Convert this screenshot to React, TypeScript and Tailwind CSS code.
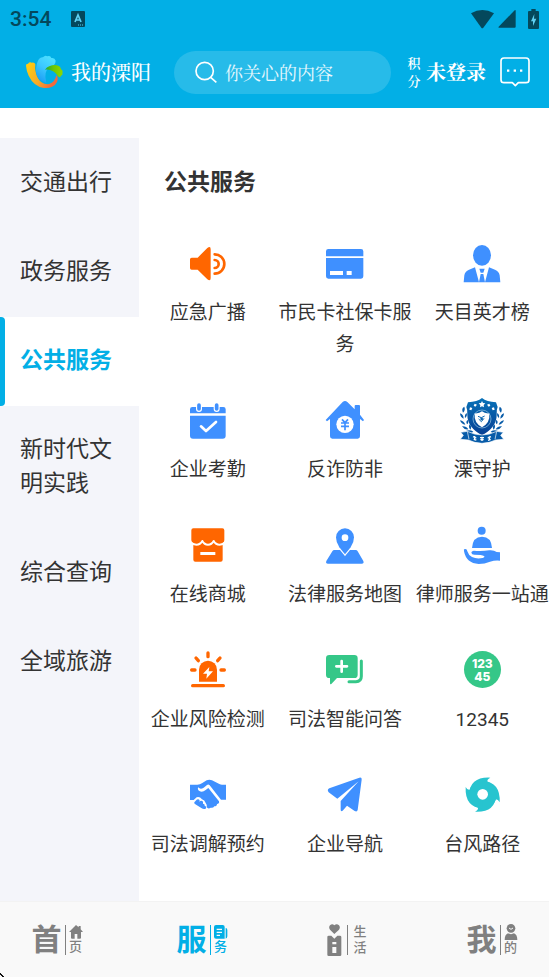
import React from "react";

const BLUE = "#3f90ff";
const ORANGE = "#ff6600";
const GREEN = "#35c788";

function Icon({ children }: { children: React.ReactNode }) {
  return (
    <svg viewBox="0 0 144 144" className="h-12 w-12 shrink-0" fill="none" aria-hidden="true">
      {children}
    </svg>
  );
}

const Speaker = () => (
  <Icon>
    <path fill={ORANGE} d="M23 53H41L70 24Q80 17 80 28V114Q80 125 70 118L41 89H23Q18 89 18 84V58Q18 53 23 53Z" />
    <path stroke={ORANGE} strokeWidth="8" strokeLinecap="round" d="M92 43A29 29 0 0 1 92 101" />
    <path stroke={ORANGE} strokeWidth="8" strokeLinecap="round" d="M92 60A12 12 0 0 1 92 84" />
  </Icon>
);

const Card = () => (
  <Icon>
    <path fill={BLUE} d="M22 27H120Q127 27 127 34V49H15V34Q15 27 22 27ZM15 54H127V109Q127 116 120 116H22Q15 116 15 109Z" />
    <path fill="#fff" d="M27 93H66V105H27ZM77 93H92V105H77Z" />
  </Icon>
);

const Person = () => (
  <Icon>
    <ellipse cx="72" cy="46" rx="27" ry="31" fill={BLUE} />
    <path fill={BLUE} d="M17 127L19 106Q21 94 33 89L51 82L63 127ZM127 127L125 106Q123 94 111 89L93 82L81 127Z" />
    <path fill={BLUE} d="M64 86H80L76 98H68ZM68 102H76L81 127H63Z" />
  </Icon>
);

const CalendarTick = () => (
  <Icon>
    <path fill={BLUE} d="M25 30H118Q125 30 125 37V49H18V37Q18 30 25 30ZM18 56H125V116Q125 125 116 125H27Q18 125 18 116Z" />
    <path stroke="#fff" strokeWidth="18" strokeLinecap="round" d="M45 24V36M98 24V36" />
    <path stroke={BLUE} strokeWidth="11" strokeLinecap="round" d="M45 24V36M98 24V36" />
    <path stroke="#fff" strokeWidth="8" strokeLinecap="round" strokeLinejoin="round" d="M51 88L66 102L96 75" />
  </Icon>
);

const House = () => (
  <Icon>
    <path fill={BLUE} d="M65 15Q72 9 79 15L101 37V27Q101 24 104 24H114Q117 24 117 27V53L129 69L126 73L117 66V118Q117 125 110 125H34Q27 125 27 118V66L18 73L14 69Z" />
    <circle cx="72" cy="82" r="26" fill="#fff" />
    <path stroke={BLUE} strokeWidth="5" d="M63 67L72 77L81 67M60 78H84M60 88H84M72 77V100" />
  </Icon>
);

const LAUREL =
  "M19 29Q9 33 15 47Q23 40 19 29ZM6 49Q7 62 17 65Q17 53 6 49ZM26 48Q19 53 21 63Q29 57 26 48ZM6 70Q10 82 22 83Q18 72 6 70ZM28 68Q22 75 27 82Q34 76 28 68ZM12 88Q19 99 31 97Q25 87 12 88ZM35 82Q30 90 37 98Q43 91 35 82ZM24 102Q36 112 46 104Q36 97 24 102Z";

const Shield = () => (
  <Icon>
    <defs>
      <linearGradient id="shieldBlue" x1="0" y1="0" x2="0" y2="1">
        <stop offset="0" stopColor="#0872b8" />
        <stop offset="1" stopColor="#083f93" />
      </linearGradient>
    </defs>
    <path fill="url(#shieldBlue)" d="M72 3Q86 14 114 16L119 30Q115 38 116 54Q116 91 72 115Q28 91 28 54Q29 38 25 30L30 16Q58 14 72 3Z" />
    <path fill="#fff" d="M72 12L75 18L82 19L77 24L78 31L72 28L66 31L67 24L62 19L69 18Z" />
    <path fill="#fff" d="M50 20L57 23L52 29L47 26ZM94 20L87 23L92 29L97 26ZM36 31L43 33L40 40L34 38ZM108 31L101 33L104 40L110 38Z" />
    <circle cx="72" cy="66" r="27" stroke="#9cc8e6" strokeWidth="2" />
    <path fill="#fff" d="M72 43Q80 50 94 49Q97 78 72 91Q47 78 50 49Q64 50 72 43Z" />
    <path stroke="#0b65ad" strokeWidth="3" d="M60 58L70 62L80 57M62 66L70 74L78 64M70 62V66" />
    <circle cx="71" cy="66" r="4" fill="#0b65ad" />
    <path fill="#075ba8" d={LAUREL} />
    <path fill="#075ba8" transform="matrix(-1 0 0 1 144 0)" d={LAUREL} />
    <path fill="#075ba8" stroke="#fff" strokeWidth="2" d="M8 106L28 103Q72 125 116 103L136 106L128 115L137 127L113 129Q72 149 31 129L7 127L16 115Z" />
    <path stroke="#fff" strokeWidth="2" d="M28 103L33 127M116 103L111 127" />
    <path stroke="#fff" strokeWidth="4" d="M45 119L55 123M47 127L55 129M50 117V130M66 122H78M72 119V132M67 128H77M89 123L99 119M90 130L98 127M94 118V131" />
  </Icon>
);

const Store = () => (
  <Icon>
    <path fill={ORANGE} d="M28 19H115Q121 19 121 25V54Q121 62 116 65V113Q116 119 110 119H34Q28 119 28 113V65Q22 62 22 54V25Q22 19 28 19Z" />
    <path stroke="#fff" strokeWidth="6" strokeLinejoin="round" d="M19 60Q27 68 37 68Q49 68 55 57Q61 68 72 68Q83 68 89 57Q95 68 107 68Q117 68 124 60" />
    <path fill="#fff" d="M49 90H94V99H49Z" />
  </Icon>
);

const MapPin = () => (
  <Icon>
    <path fill={BLUE} d="M40 84H104Q108 84 110 88L127 117Q130 125 122 125H21Q13 125 16 117L34 88Q36 84 40 84Z" />
    <path fill={BLUE} stroke="#fff" strokeWidth="7" paintOrder="stroke" d="M72 97Q66 90 55 76Q45 62 45 46A27 27 0 0 1 99 46Q99 62 89 76Q78 90 72 97Z" />
    <circle cx="72" cy="47" r="10" fill="#fff" />
  </Icon>
);

const BellHand = () => (
  <Icon>
    <circle cx="71" cy="26" r="12" fill={BLUE} />
    <path fill={BLUE} d="M42 78Q44 44 72 44Q100 44 102 78Z" />
    <path fill={BLUE} d="M18 88Q16 80 22 81Q27 81 28 88Q31 99 42 105Q56 112 74 108Q82 105 78 102Q72 98 49 98Q41 98 40 92Q40 87 47 86Q72 88 94 85Q108 84 116 90L126 91V116Q112 114 96 119Q80 126 62 126Q25 124 18 88Z" />
  </Icon>
);

const Alarm = () => (
  <Icon>
    <path fill={ORANGE} d="M45 104V68A27 27 0 0 1 99 68V104Z" />
    <path stroke={ORANGE} strokeWidth="10" strokeLinecap="round" d="M72 18V29M36 33L43 41M108 33L101 41M23 69H33M111 69H121M26 116H118" />
    <path fill="#fff" d="M76 60L57 80H69L67 95L87 73H74Z" />
  </Icon>
);

const ChatPlus = () => (
  <Icon>
    <path fill={GREEN} d="M25 24H100Q110 24 110 34V83Q110 93 100 93H48L31 111Q27 114 27 108V93H25Q15 93 15 83V34Q15 24 25 24Z" />
    <path stroke="#fff" strokeWidth="8" strokeLinecap="round" d="M62 42V74M46 58H78" />
    <path stroke={GREEN} strokeWidth="9" strokeLinecap="round" d="M121 42V88Q121 104 105 104H84" />
  </Icon>
);

const Hotline = () => (
  <span className="flex h-12 w-12 shrink-0 justify-center pt-1">
    <span className="flex h-[37px] w-[37px] flex-col items-center justify-center rounded-full bg-[#35c788] font-[Inter,sans-serif] text-[12px] leading-[13px] font-extrabold text-white">
      <span>123</span>
      <span>45</span>
    </span>
  </span>
);

const Handshake = () => (
  <Icon>
    <path fill={BLUE} d="M18 38H40Q48 38 55 33L68 25Q76 21 84 25L106 36Q110 38 114 38H126V83H111L77 40Q73 36 69 39L59 47Q49 54 43 46Q39 53 46 57Q55 62 65 54L73 48L105 88Q107 95 99 96Q99 103 91 103Q87 109 80 107Q73 112 68 106Q70 98 65 93Q62 84 54 82Q47 73 38 76L29 84H18Z" />
    <path fill={BLUE} d="M31 91L38 83Q43 79 47 85L46 89Q52 84 57 89V95Q63 95 62 101Q69 104 65 110Q59 113 52 108L34 97Q29 94 31 91Z" />
  </Icon>
);

const Plane = () => (
  <Icon>
    <path fill={BLUE} d="M25 49L115 17Q123 15 122 23L110 114Q108 121 101 117L78 101L65 116Q59 120 59 113V87L113 28L49 80L23 61Q17 53 25 49Z" />
  </Icon>
);

const Typhoon = () => (
  <Icon>
    <g fill="#27c4cf">
      <circle cx="74" cy="68" r="42" />
      <path d="M33 68Q36 14 97 17Q86 22 88 32L74 68Z" />
      <path transform="rotate(90 74 68)" d="M33 68Q36 14 97 17Q86 22 88 32L74 68Z" />
      <path transform="rotate(180 74 68)" d="M33 68Q36 14 97 17Q86 22 88 32L74 68Z" />
      <path transform="rotate(270 74 68)" d="M33 68Q36 14 97 17Q86 22 88 32L74 68Z" />
    </g>
    <circle cx="74" cy="67" r="16" fill="#fff" />
  </Icon>
);

const categories = ["交通出行", "政务服务", "公共服务", "新时代文明实践", "综合查询", "全域旅游"];

const services = [
  { label: "应急广播", icon: Speaker },
  { label: "市民卡社保卡服务", icon: Card },
  { label: "天目英才榜", icon: Person },
  { label: "企业考勤", icon: CalendarTick },
  { label: "反诈防非", icon: House },
  { label: "溧守护", icon: Shield },
  { label: "在线商城", icon: Store },
  { label: "法律服务地图", icon: MapPin },
  { label: "律师服务一站通", icon: BellHand },
  { label: "企业风险检测", icon: Alarm },
  { label: "司法智能问答", icon: ChatPlus },
  { label: "12345", icon: Hotline },
  { label: "司法调解预约", icon: Handshake },
  { label: "企业导航", icon: Plane },
  { label: "台风路径", icon: Typhoon },
];

function StatusBar() {
  return (
    <div className="flex h-[38px] items-center px-[10px] text-[#04485c]">
      <span className="text-[21px] leading-6 font-medium">3:54</span>
      <svg viewBox="0 0 14 16" className="ml-5 h-4 w-[14px]" aria-hidden="true">
        <rect width="14" height="16" rx="1" fill="currentColor" />
        <path d="M4 11L7 4L10 11M5 9H9" fill="none" stroke="#5fd0f2" strokeWidth="1.7" />
        <path d="M7 14h6" stroke="#5fd0f2" strokeWidth="1" strokeDasharray="1 1" />
      </svg>
      <svg viewBox="0 0 69 60" className="ml-auto h-5 w-[23px]" fill="currentColor" aria-hidden="true">
        <path d="M0 13Q34-7 69 13L37 56Q34 59 31 56Z" />
      </svg>
      <svg viewBox="0 0 54 54" className="ml-1 h-[18px] w-[18px]" fill="currentColor" aria-hidden="true">
        <path d="M53 2V50Q53 53 50 53H3Q0 53 2 50L50 1Q53-1 53 2Z" />
      </svg>
      <svg viewBox="0 0 33 60" className="ml-3 h-5 w-[11px]" aria-hidden="true">
        <path fill="currentColor" d="M10 0H23V6H30Q33 6 33 9V57Q33 60 30 60H3Q0 60 0 57V9Q0 6 3 6H10Z" />
        <path fill="#5fd0f2" d="M19 15L9 37H15V51L25 29H18Z" />
      </svg>
    </div>
  );
}

function Logo() {
  return (
    <svg viewBox="0 0 114 114" className="h-[38px] w-[38px] shrink-0" aria-hidden="true">
      <defs>
        <linearGradient id="logoWarm" x1="0" y1="0" x2="1" y2="0.4">
          <stop offset="0.1" stopColor="#ffcb12" />
          <stop offset="0.6" stopColor="#f8a928" />
          <stop offset="1" stopColor="#f4683c" />
        </linearGradient>
        <linearGradient id="logoBlue" x1="0.8" y1="0" x2="0.3" y2="1">
          <stop offset="0" stopColor="#4fe3ff" />
          <stop offset="0.5" stopColor="#3cc8ff" />
          <stop offset="1" stopColor="#1b9df4" />
        </linearGradient>
        <linearGradient id="logoGreen" x1="0" y1="0" x2="1" y2="0">
          <stop offset="0" stopColor="#1fa83a" />
          <stop offset="0.5" stopColor="#6fc800" />
          <stop offset="1" stopColor="#8ed800" />
        </linearGradient>
      </defs>
      <path fill="url(#logoWarm)" d="M3 38Q2 32 9 32Q14 26 20 29Q29 27 31 34Q28 56 39 76Q50 96 73 93Q90 88 94 67Q101 74 96 87Q86 107 57 105Q26 100 11 68Q4 52 3 38Z" />
      <path fill="url(#logoBlue)" d="M33 56Q33 30 42 18Q47 12 54 13Q60 5 67 10Q76 6 79 15Q89 13 92 23Q92 36 76 43Q54 54 64 90Q36 82 33 56Z" />
      <path fill="url(#logoGreen)" d="M60 50Q70 36 91 36Q106 37 108 49Q115 53 112 60Q114 66 108 68Q105 76 99 70Q86 48 60 50Z" />
    </svg>
  );
}

function Header() {
  return (
    <header className="bg-[#02afe6] text-white">
      <StatusBar />
      <div className="flex h-[70px] items-center pr-[19px] pb-[2px] pl-[25px]">
        <Logo />
        <h1 className="ml-2 font-['Noto_Serif_CJK_SC','Noto_Sans_CJK_SC',serif] text-[20px] leading-7 font-medium whitespace-nowrap">我的溧阳</h1>
        <div className="ml-[23px] flex h-[43px] min-w-0 flex-1 items-center rounded-full bg-white/15 pr-4 pl-[21px]">
          <svg viewBox="0 0 66 66" className="h-[22px] w-[22px] shrink-0" fill="none" stroke="currentColor" strokeWidth="5" aria-hidden="true">
            <circle cx="29" cy="30" r="26" />
            <path d="M47 49L64 64" />
          </svg>
          <input
            type="search"
            aria-label="你关心的内容"
            placeholder="你关心的内容"
            className="ml-2 w-full min-w-0 bg-transparent font-['Noto_Serif_CJK_SC','Noto_Sans_CJK_SC',serif] text-[18px] leading-7 outline-none placeholder:text-white/90"
          />
        </div>
        <button type="button" className="ml-4 flex shrink-0 items-center gap-[5px] font-['Noto_Serif_CJK_SC','Noto_Sans_CJK_SC',serif]">
          <span className="w-[14px] text-[13px] leading-[18px] font-semibold">积分</span>
          <span className="text-[20px] leading-7 font-bold whitespace-nowrap">未登录</span>
        </button>
        <button type="button" aria-label="消息" className="ml-[14px] shrink-0">
          <svg viewBox="0 0 90 90" className="h-[30px] w-[30px]" fill="none" stroke="currentColor" strokeWidth="5" strokeLinejoin="round" aria-hidden="true">
            <path d="M12 3H78Q87 3 87 12V68Q87 77 78 77H55L46 86L37 77H12Q3 77 3 68V12Q3 3 12 3Z" />
            <path strokeWidth="7" d="M21 41H28M41 41H48M60 41H67" />
          </svg>
        </button>
      </div>
    </header>
  );
}

function Sidebar() {
  return (
    <nav className="w-[139px] shrink-0 bg-[#f4f5fa] pt-px" aria-label="服务分类">
      {categories.map((name) =>
        name === "公共服务" ? (
          <button key={name} type="button" aria-current="true" className="relative block w-full bg-white px-5 pt-[27px] pb-7 text-left text-[23px] leading-[34px] font-bold text-[#02afe6]">
            <span className="absolute inset-y-0 left-0 w-[5px] rounded-r-sm bg-[#02afe6]" />
            {name}
          </button>
        ) : (
          <button key={name} type="button" className="block w-full px-5 pt-[27px] pb-7 text-left text-[23px] leading-[34px]">
            {name}
          </button>
        ),
      )}
    </nav>
  );
}

function TabBar() {
  const tab = "flex w-[52px] items-center justify-center gap-[3px]";
  const big = "text-[30px] leading-8 font-bold";
  const small = "text-[13px] leading-4 font-medium";
  const divider = "h-[30px] w-px shrink-0 bg-current";
  const stack = "flex shrink-0 flex-col items-center";
  return (
    <nav className="flex h-[76px] items-center justify-between border-t border-[#f3f3f3] bg-[#f9f9f9] px-[31px] text-[#808080]" aria-label="主导航">
      <button type="button" className={tab}>
        <span className={big}>首</span>
        <span className={divider} />
        <span className={stack}>
          <svg viewBox="0 0 42 42" className="h-[14px] w-[14px]" fill="currentColor" aria-hidden="true">
            <path d="M21 0L29 7V3H35V13L42 21H36V38Q36 41 33 41H25V27H17V41H9Q6 41 6 38V21H0Z" />
          </svg>
          <span className={small}>页</span>
        </span>
      </button>
      <button type="button" aria-current="page" className="flex w-[52px] items-center justify-center gap-[3px] text-[#02afe6]">
        <span className={big}>服</span>
        <span className={divider} />
        <span className={stack}>
          <svg viewBox="0 0 42 42" className="h-[14px] w-[14px]" fill="currentColor" aria-hidden="true">
            <path d="M6 0H26Q32 0 32 6V41H6Q0 41 0 35V6Q0 0 6 0ZM35 9Q40 9 40 15V34Q40 40 35 41Z" />
            <path stroke="#f9f9f9" strokeWidth="4" d="M8 13H24M8 22H24M8 31H18" />
          </svg>
          <span className={small}>务</span>
        </span>
      </button>
      <button type="button" className="flex w-[52px] items-center justify-center gap-[5px]">
        <svg viewBox="0 0 45 96" className="h-8 w-[15px]" fill="currentColor" aria-hidden="true">
          <path d="M22 30L9 17Q4 10 9 4Q16-3 22 4Q29-3 36 4Q41 10 36 17Z" />
          <path d="M5 35H13L22 44L31 35H39Q43 35 43 39V92Q43 96 39 96H5Q1 96 1 92V39Q1 35 5 35Z" />
          <path fill="#f9f9f9" d="M16 54H28V61H16ZM16 69H28V87H16Z" />
        </svg>
        <span className={divider} />
        <span className={stack}>
          <span className={small}>生</span>
          <span className={small}>活</span>
        </span>
      </button>
      <button type="button" className={tab}>
        <span className={big}>我</span>
        <span className={divider} />
        <span className={stack}>
          <svg viewBox="0 0 42 48" className="h-4 w-[14px]" fill="currentColor" aria-hidden="true">
            <circle cx="21" cy="13" r="13" />
            <path d="M12 28Q21 33 30 28Q40 32 40 48H2Q2 32 12 28Z" />
            <path fill="none" stroke="#f9f9f9" strokeWidth="3" d="M15 12Q21 20 27 12" />
          </svg>
          <span className={small}>的</span>
        </span>
      </button>
    </nav>
  );
}

export default function App() {
  return (
    <div className="relative flex min-h-screen flex-col overflow-x-clip bg-white font-[Roboto,'Noto_Sans_CJK_SC',sans-serif] text-[#333333]" lang="zh-CN">
      <Header />
      <div className="mt-[30px] flex flex-1">
        <Sidebar />
        <main className="min-w-0 flex-1 pt-7">
          <h2 className="px-[25px] text-[23px] leading-[33px] font-bold">公共服务</h2>
          <div className="mt-[41px] -mr-[2px] grid grid-cols-3 gap-y-9">
            {services.map(({ label, icon: ServiceIcon }) => (
              <button key={label} type="button" className="flex flex-col items-center gap-[9px]">
                <ServiceIcon />
                <span className="text-[19px] leading-8">{label}</span>
              </button>
            ))}
          </div>
        </main>
      </div>
      <TabBar />
      <svg viewBox="0 0 4 4" className="absolute bottom-0 left-0 h-1 w-1" aria-hidden="true">
        <path d="M0 0h1v1h1v1h1v1h1v1h-2v-1h-1v-1h-1z" fill="#111" />
      </svg>
    </div>
  );
}
